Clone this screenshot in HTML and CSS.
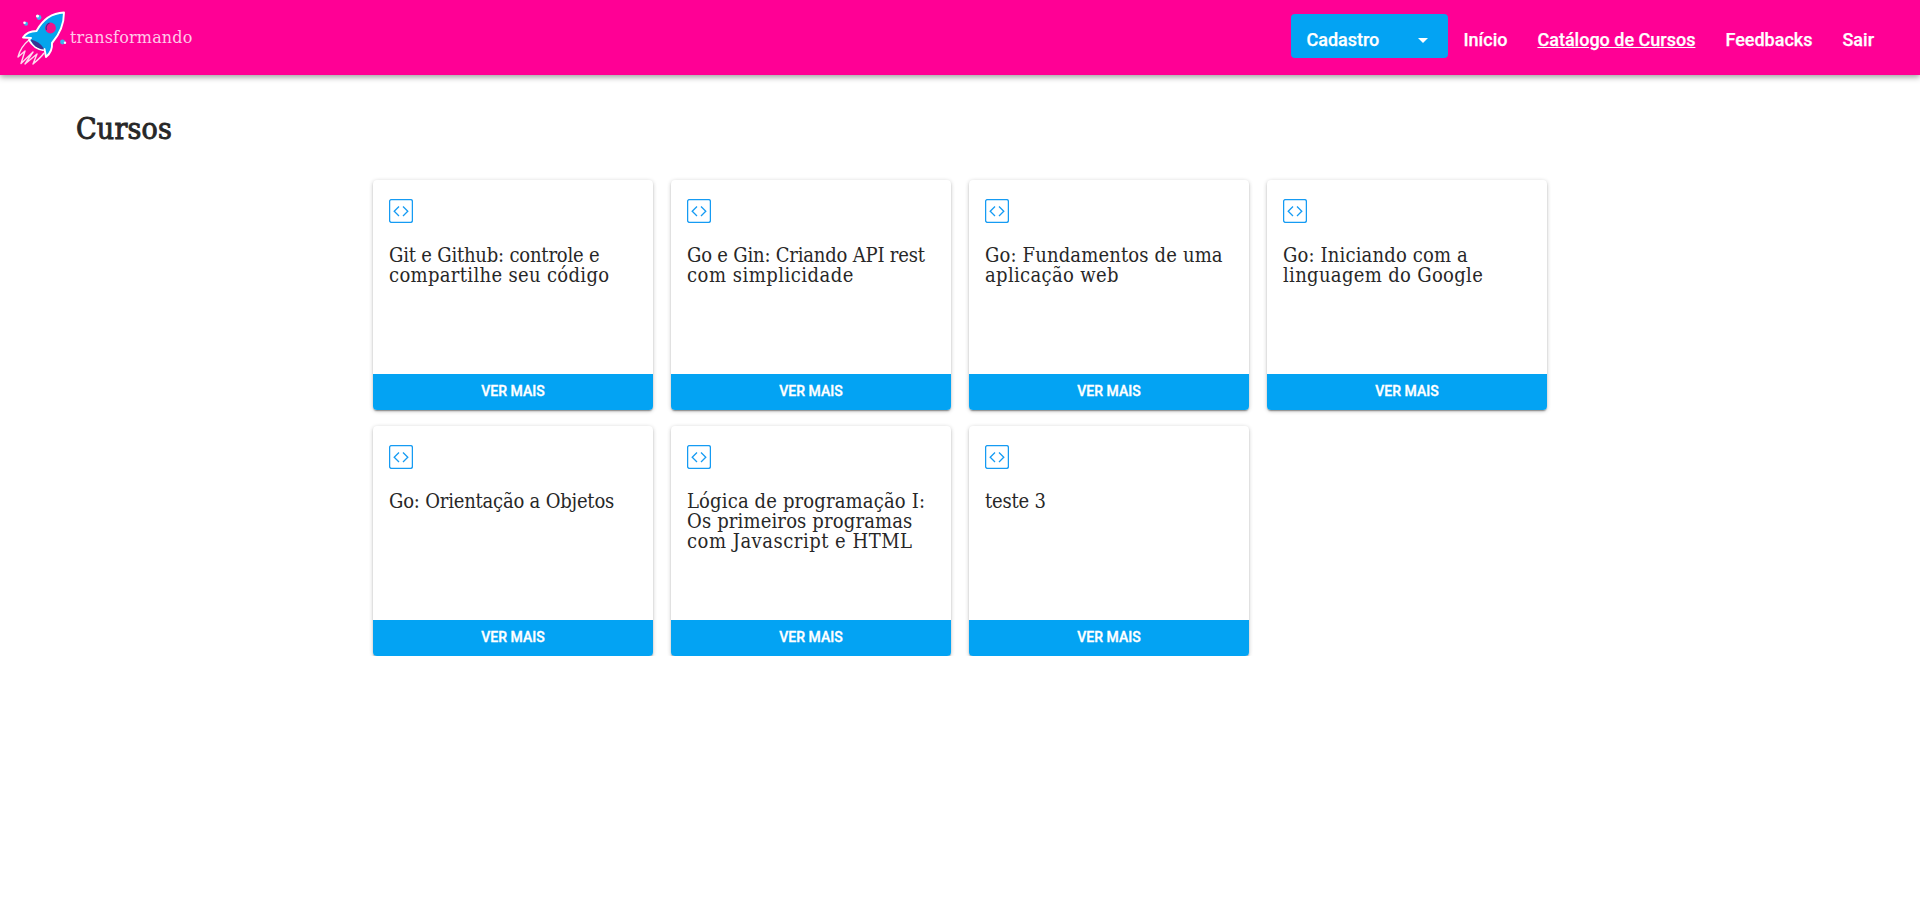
FILE: index.html
```
<!DOCTYPE html>
<html lang="pt-BR">
<head>
<meta charset="utf-8">
<title>Cursos</title>
<link rel="stylesheet" href="styles.css">
</head>
<body>
<svg class="sprite" width="0" height="0" aria-hidden="true">
  <symbol id="code" viewBox="0 0 24 24">
    <rect x=".6" y=".6" width="22.8" height="22.8" rx="1.8"/>
    <path d="M10 7.5 5.2 12.2 10 17M14 7.5l4.8 4.7L14 17"/>
  </symbol>
</svg>
<header class="topbar">
  <a class="brand">
    <svg class="rocket" viewBox="0 0 52 56">
      <path class="flame" d="M13 30C8 34 4 39 2 47L9 41 5 53.500 17 42 9 54 21 44 17 54C23 49 26 46 28 43"/>
      <path class="hull" d="M48 2.500C36 3 27 9 20.500 21C15 21 10 23 7 27.500L15 28 13 30C17 37 21 39 27 40L28.500 39 30 47C35 43 36.500 39 36 33C43 25 48 15 48 2.500Z"/>
      <path class="base" d="M14.500 29.500C20 30.500 26 34 28 39.500C21 39 17 35 14.500 29.500Z"/>
      <circle class="port" cx="34.500" cy="18" r="5.400"/>
      <path class="glint" d="M30.500 20a5.400 5.400 0 0 1 3-7"/>
      <g class="spark"><circle cx="10" cy="13.800" r="2"/><circle cx="23" cy="7.500" r="2.400"/><circle cx="46.500" cy="32" r="2.400"/></g>
      <g class="spark-light"><circle cx="8.500" cy="12.800" r="1.300"/><circle cx="21.500" cy="6" r="1.600"/><circle cx="49" cy="32.800" r="1.200"/></g>
    </svg>
    <span class="brand-name">transformando</span>
  </a>
  <nav class="menu">
    <button class="dropdown"><span>Cadastro</span><i class="caret"></i></button>
    <a>Início</a><a class="active">Catálogo de Cursos</a><a>Feedbacks</a><a>Sair</a>
  </nav>
</header>
<main>
  <h1>Cursos</h1>
  <section class="grid">
    <article class="card"><div class="body"><svg class="icon"><use href="#code"/></svg><h2><span class="tight">Git e Github: controle e</span><br><span class="loose">compartilhe seu código</span></h2></div><button class="more">VER MAIS</button></article>
    <article class="card"><div class="body"><svg class="icon"><use href="#code"/></svg><h2><span class="tight">Go e Gin: Criando API rest</span><br><span class="wide">com simplicidade</span></h2></div><button class="more">VER MAIS</button></article>
    <article class="card"><div class="body"><svg class="icon"><use href="#code"/></svg><h2><span class="snug">Go: Fundamentos de uma</span><br><span class="loose">aplicação web</span></h2></div><button class="more">VER MAIS</button></article>
    <article class="card"><div class="body"><svg class="icon"><use href="#code"/></svg><h2><span class="snug">Go: Iniciando com a</span><br><span class="loose">linguagem do Google</span></h2></div><button class="more">VER MAIS</button></article>
    <article class="card"><div class="body"><svg class="icon"><use href="#code"/></svg><h2><span class="tight">Go: Orientação a Objetos</span></h2></div><button class="more">VER MAIS</button></article>
    <article class="card"><div class="body"><svg class="icon"><use href="#code"/></svg><h2><span class="snug">Lógica de programação I:</span><br><span class="snug">Os primeiros programas</span><br><span class="wide">com Javascript e HTML</span></h2></div><button class="more">VER MAIS</button></article>
    <article class="card"><div class="body"><svg class="icon"><use href="#code"/></svg><h2><span class="tight">teste 3</span></h2></div><button class="more">VER MAIS</button></article>
  </section>
</main>
</body>
</html>
```
FILE: styles.css
```
* { box-sizing: border-box; }
body { margin: 0; background: #fff; color: #272727; font-family: Roboto, sans-serif; }
.sprite { display: block; }
.topbar { display: flex; justify-content: space-between; height: 75px; padding: 0 31px 0 16px; background: #ff0095; box-shadow: 0 2px 6px rgba(0, 0, 0, .4); }
.brand { display: flex; align-items: flex-start; padding-top: 10px; }
.rocket { width: 52px; height: 56px; overflow: visible; }
.flame { fill: none; stroke: #ffd9ef; stroke-width: 1.4; stroke-linejoin: round; }
.hull { fill: #04a5ec; stroke: #fff; stroke-width: 1.9; stroke-linejoin: round; }
.base { fill: #3c3291; }
.port { fill: #f0148c; }
.glint { fill: none; stroke: #3c3291; stroke-width: 1.2; }
.spark { fill: #38b6ee; }
.spark-light { fill: #fff; }
.brand-name { margin: 17px 0 0 2px; color: #ffc9e8; font: 16px/22px "Roboto Slab", "DejaVu Serif", serif; letter-spacing: .18px; white-space: nowrap; }
.menu { display: flex; align-items: flex-start; padding-top: 14px; color: #fff; font-size: 18px; font-weight: 500; line-height: 52px; -webkit-text-stroke: .25px #fff; }
.menu a { padding: 0 15px; }
.menu .active { text-decoration: underline; }
.dropdown { display: flex; align-items: center; justify-content: space-between; width: 157px; height: 44px; padding: 8px 20px 0 15px; border: 0; border-radius: 4px; background: #03a3f3; color: #fff; font: 500 18px/36px Roboto, sans-serif; -webkit-text-stroke: .25px #fff; }
.caret { border: 5px solid transparent; border-top-color: #fff; border-bottom: 0; }
h1 { margin: 0; padding: 34px 0 0 76px; font: 500 30px/40px "Roboto Slab", "DejaVu Serif Condensed", "DejaVu Serif", serif; -webkit-text-stroke: .9px #272727; letter-spacing: .2px; }
.grid { display: grid; grid-template-columns: repeat(4, 280px); gap: 16px 18px; justify-content: center; padding-top: 31px; }
.card { display: flex; flex-direction: column; height: 230px; border-radius: 4px; background: #fff; box-shadow: 0 2px 2px -1px rgba(0, 0, 0, .3), 0 1px 1px rgba(0, 0, 0, .14), 0 1px 4px rgba(0, 0, 0, .22); }
.body { flex: 1; padding: 19px 16px 0; }
.icon { display: block; width: 24px; height: 24px; fill: none; stroke: #159bf3; stroke-width: 1.3; }
h2 { margin: 22px 0 0; font: 400 20px/20px "Roboto Slab", "DejaVu Serif Condensed", "DejaVu Serif", serif; white-space: nowrap; }
.tight { letter-spacing: -.2px; }
.snug { letter-spacing: .15px; }
.loose { letter-spacing: .33px; }
.wide { letter-spacing: .5px; }
.more { height: 36px; padding: 0 0 2px; border: 0; border-radius: 0 0 4px 4px; background: #03a3f3; color: #fff; font: 500 14px/34px Roboto, sans-serif; -webkit-text-stroke: .35px #fff; }
```
